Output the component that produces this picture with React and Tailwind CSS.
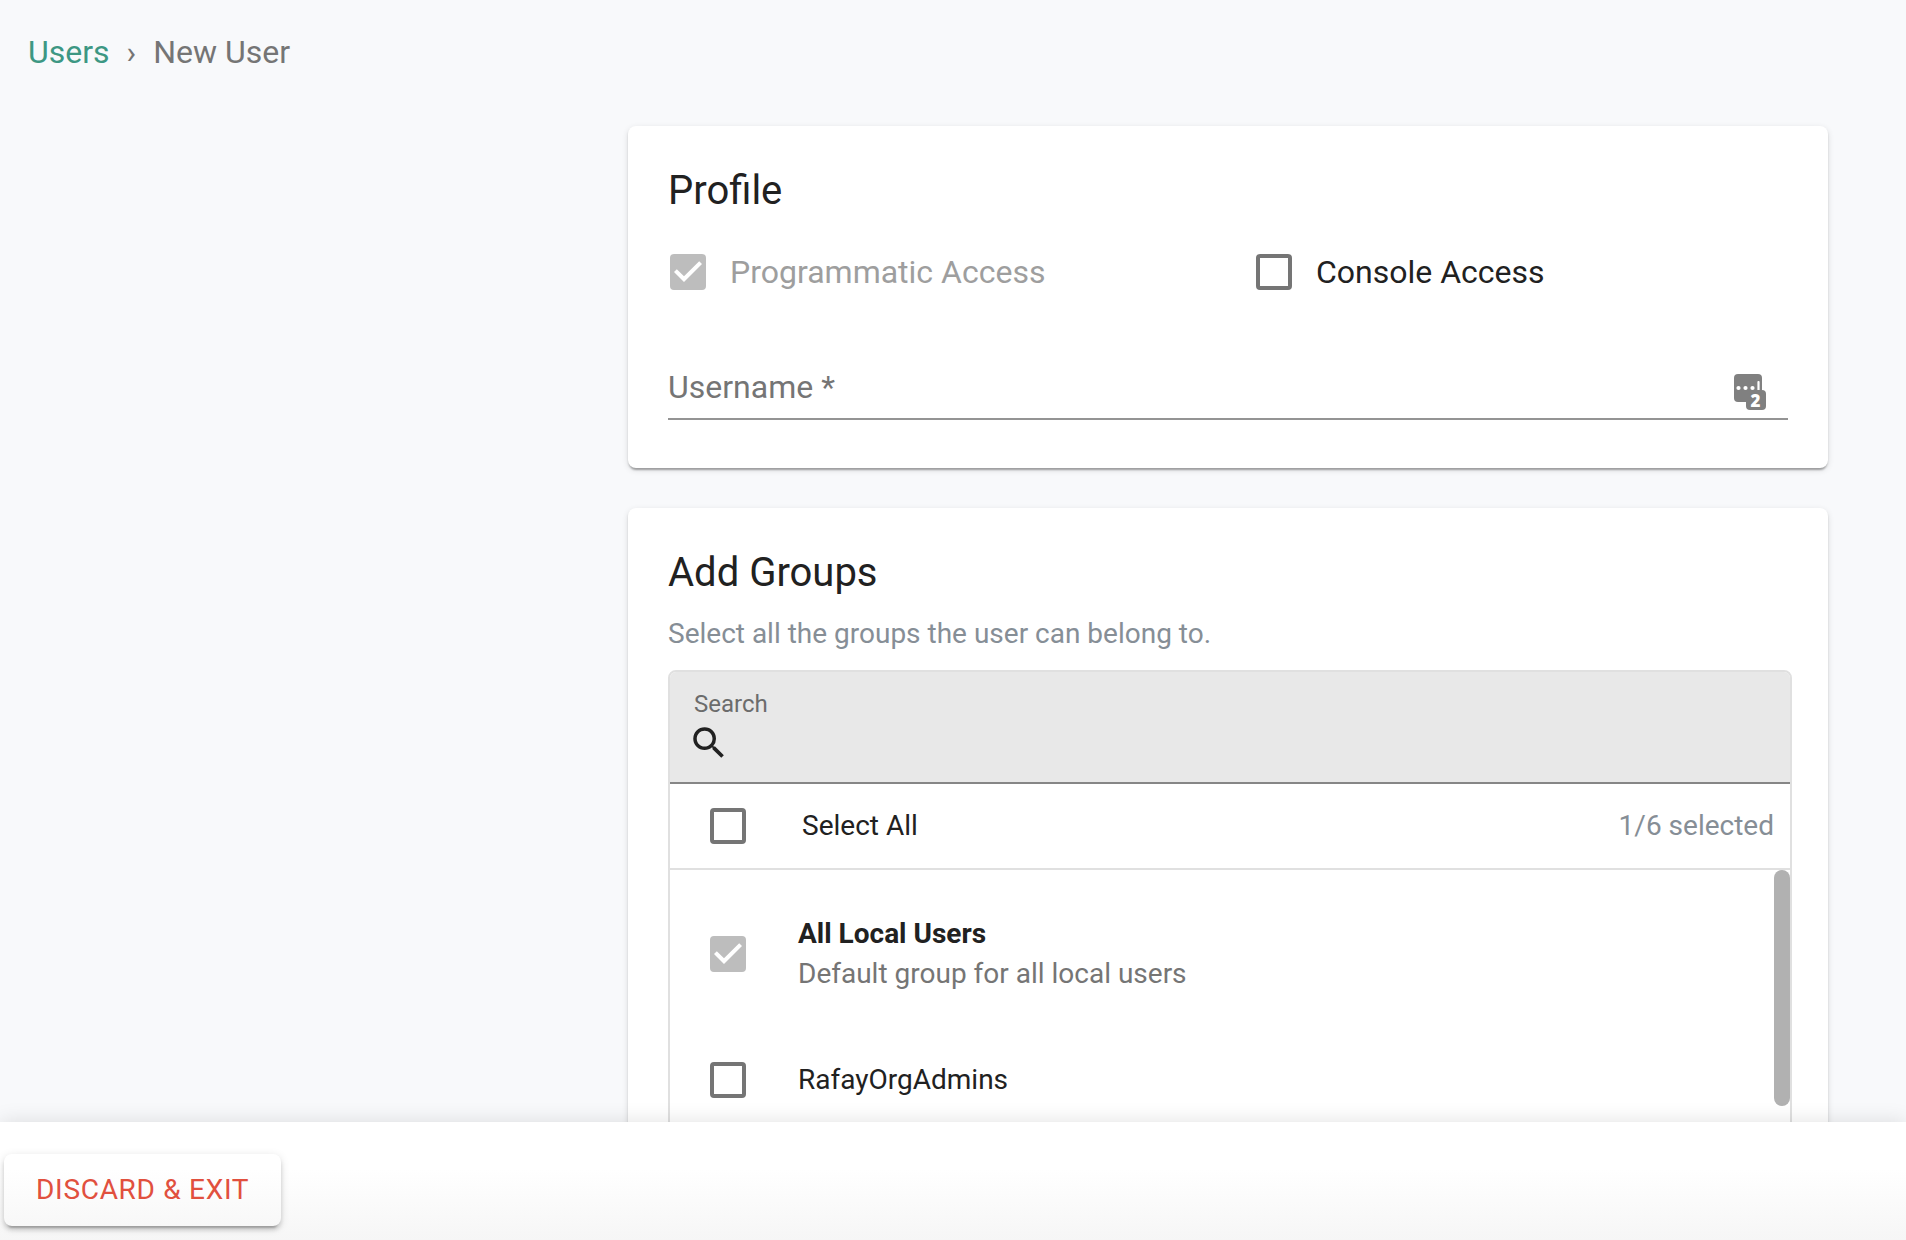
import React, { useState } from "react";
import { MdSearch } from "react-icons/md";

const GROUPS = [
  {
    id: "all-local-users",
    name: "All Local Users",
    description: "Default group for all local users",
    isDefault: true,
  },
  { id: "rafay-org-admins", name: "RafayOrgAdmins" },
];

const TOTAL_GROUPS = 6;

const Checkbox = ({ id, checked, disabled, onChange }) => (
  <span className="relative block size-9 shrink-0">
    <input
      id={id}
      type="checkbox"
      checked={checked}
      disabled={disabled}
      onChange={onChange}
      className="peer block size-9 appearance-none rounded-sm border-4 border-[#757575] checked:bg-[#757575] disabled:border-[#bdbdbd] disabled:checked:bg-[#bdbdbd]"
    />
    <svg
      viewBox="3 3 18 18"
      className="pointer-events-none absolute inset-0 hidden size-9 fill-white peer-checked:block"
    >
      <path d="M10 17l-5-5 1.41-1.41L10 14.17l7.59-7.59L19 8l-9 9z" />
    </svg>
  </span>
);

const Card = ({ title, children }) => (
  <section className="rounded-lg bg-white p-10 shadow-[0_4px_2px_-2px_rgba(0,0,0,0.2),0_2px_2px_rgba(0,0,0,0.14),0_2px_6px_rgba(0,0,0,0.12)]">
    <h2 className="text-[40px] leading-[50px]">{title}</h2>
    {children}
  </section>
);

const PasswordManagerIcon = () => (
  <svg viewBox="0 0 32 36" className="mb-2 h-9 w-8 self-end">
    <rect width="28" height="28" rx="4" fill="#808080" />
    <circle cx="4.5" cy="14" r="2.1" fill="#fff" />
    <circle cx="11.5" cy="14" r="2.1" fill="#fff" />
    <circle cx="18.5" cy="14" r="2.1" fill="#fff" />
    <rect x="23.4" y="7" width="2.2" height="10" rx="1" fill="#fff" />
    <rect x="12" y="16" width="20" height="20" rx="4" fill="#808080" />
    <text
      x="21.5"
      y="32.5"
      textAnchor="middle"
      fontFamily="Open Sans, sans-serif"
      fontSize="17"
      fontWeight="800"
      fill="#fff"
    >
      2
    </text>
  </svg>
);

const NewUserPage = () => {
  const [consoleAccess, setConsoleAccess] = useState(false);
  const [username, setUsername] = useState("");
  const [search, setSearch] = useState("");
  const [selected, setSelected] = useState(["all-local-users"]);

  const toggleGroup = (id) => {
    setSelected((prev) =>
      prev.includes(id) ? prev.filter((g) => g !== id) : [...prev, id],
    );
  };

  const allSelected = selected.length === GROUPS.length;

  const toggleAll = () => {
    setSelected(allSelected ? ["all-local-users"] : GROUPS.map((g) => g.id));
  };

  const visibleGroups = GROUPS.filter((g) =>
    g.name.toLowerCase().includes(search.toLowerCase()),
  );

  const renderGroup = (group) => (
    <li key={group.id}>
      <label
        htmlFor={group.id}
        className="flex min-h-[116px] items-center gap-[52px] px-10 py-7 text-[28px] leading-10"
      >
        <Checkbox
          id={group.id}
          checked={selected.includes(group.id)}
          disabled={group.isDefault}
          onChange={() => toggleGroup(group.id)}
        />
        <span>
          <span className={group.isDefault ? "block font-bold" : "block"}>
            {group.name}
          </span>
          {group.description && (
            <span className="block text-[#757575]">{group.description}</span>
          )}
        </span>
      </label>
    </li>
  );

  return (
    <div className="flex h-screen flex-col bg-[#f8f9fb] font-[Roboto,sans-serif] text-[#212121]">
      <main className="min-h-0 flex-1 overflow-y-auto [scrollbar-width:none]">
        <nav
          aria-label="Breadcrumb"
          className="flex gap-[17px] px-7 pt-[30px] text-[32px] leading-11 text-[#757575]"
        >
          <a href="#users" className="text-[#3d9783]">
            Users
          </a>
          <span>›</span>
          <span>New User</span>
        </nav>

        <div className="flex flex-col gap-10 pt-[52px] pr-[78px] pb-10 pl-[628px]">
          <Card title="Profile">
            <div className="mt-[30px] grid grid-cols-2 gap-14 px-0.5 text-[32px] leading-13">
              <label
                htmlFor="programmatic"
                className="flex items-center gap-6 text-[#9e9e9e]"
              >
                <Checkbox id="programmatic" checked disabled />
                Programmatic Access
              </label>
              <label htmlFor="console" className="flex items-center gap-6">
                <Checkbox
                  id="console"
                  checked={consoleAccess}
                  onChange={(e) => setConsoleAccess(e.target.checked)}
                />
                Console Access
              </label>
            </div>

            <div className="mt-[54px] mb-2 flex h-[68px] items-center border-b-2 border-[#949494] pt-1 pr-[22px]">
              <input
                type="text"
                aria-label="Username"
                placeholder="Username *"
                value={username}
                onChange={(e) => setUsername(e.target.value)}
                className="min-w-0 flex-1 text-[32px] leading-11 outline-none placeholder:text-[#757575]"
              />
              <PasswordManagerIcon />
            </div>
          </Card>

          <Card title="Add Groups">
            <p className="mt-4 text-[28px] leading-10 text-[#868e96]">
              Select all the groups the user can belong to.
            </p>

            <div className="mt-4 -mr-1 overflow-hidden rounded-lg border-2 border-[#e0e0e0]">
              <div className="h-28 border-b-2 border-[#868686] bg-[#e8e8e8] px-6 pt-4">
                <label
                  htmlFor="search"
                  className="block text-2xl leading-8 text-[#6c6c6c]"
                >
                  Search
                </label>
                <div className="mt-0.5 flex items-center">
                  <MdSearch className="-ml-1.5 size-[42px]" />
                  <input
                    id="search"
                    type="text"
                    value={search}
                    onChange={(e) => setSearch(e.target.value)}
                    className="min-w-0 flex-1 text-[28px] leading-10 outline-none"
                  />
                </div>
              </div>

              <div className="flex items-center justify-between border-b-2 border-[#e0e0e0] pr-4 pl-10 text-[28px] leading-[84px]">
                <label
                  htmlFor="select-all"
                  className="flex items-center gap-14"
                >
                  <Checkbox
                    id="select-all"
                    checked={allSelected}
                    onChange={toggleAll}
                  />
                  Select All
                </label>
                <span className="text-[#868e96]">
                  {selected.length}/{TOTAL_GROUPS} selected
                </span>
              </div>

              <div className="relative">
                <ul className="py-4">{visibleGroups.map(renderGroup)}</ul>
                <div className="absolute top-0 right-0 h-[236px] w-4 rounded-full bg-[#b1b1b1]" />
              </div>
            </div>
          </Card>
        </div>
      </main>

      <footer className="relative z-10 bg-linear-to-b from-white from-40% to-[#f6f6f6] px-1 pt-8 pb-3.5 shadow-[0_0_20px_rgba(0,0,0,0.12)]">
        <button
          type="button"
          className="h-[72px] rounded-lg px-8 text-[28px] leading-10 tracking-wide text-[#e1503e] uppercase shadow-[0_6px_2px_-4px_rgba(0,0,0,0.2),0_4px_4px_rgba(0,0,0,0.14),0_2px_10px_rgba(0,0,0,0.12)]"
        >
          Discard &amp; Exit
        </button>
      </footer>
    </div>
  );
};

export default NewUserPage;
